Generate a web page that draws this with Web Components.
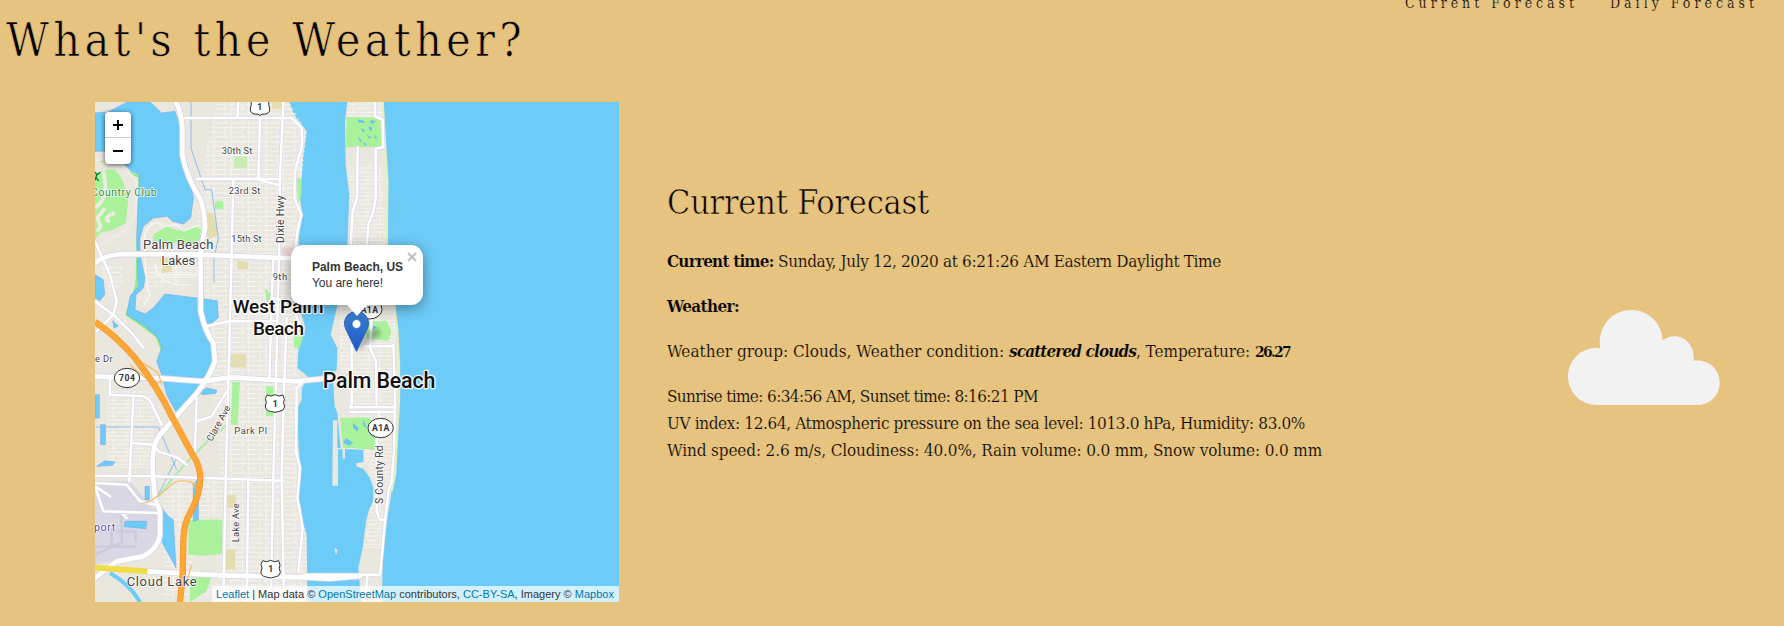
<!DOCTYPE html>
<html lang="en">
<head>
<meta charset="utf-8">
<title>What's the Weather?</title>
<style>
  html, body { margin: 0; height: 100%; overflow: hidden; background: #e6c47f; color: #000; }
  body { font-family: "DejaVu Serif Condensed", "DejaVu Serif", serif; font-stretch: condensed; }
</style>
</head>
<body>
<weather-page></weather-page>
<script>
const define = (name, html, setup) => customElements.define(name, class extends HTMLElement {
  connectedCallback() {
    if (this.shadowRoot) return;
    const t = document.createElement('template');
    t.innerHTML = html;
    this.attachShadow({ mode: 'open' }).append(t.content.cloneNode(true));
    if (setup) setup(this);
  }
});

/* A run of text whose tracking is adjusted to fill a given measure. */
define('fit-text', `<style>:host{display:inline-block;white-space:pre;flex:none}</style><slot></slot>`, el => {
  const w = +el.getAttribute('w'), n = el.textContent.length;
  const natural = el.getBoundingClientRect().width;
  el.style.letterSpacing = ((w - natural) / n).toFixed(4) + 'px';
  el.style.width = w + 'px';
});

define('site-header', `<style>
  :host{display:flex;justify-content:space-between;height:102px;box-sizing:border-box}
  h1{margin:0;padding-left:6px;font-weight:400;font-size:46.500px;line-height:80px;-webkit-text-stroke:.7px #e6c47f}
  nav{display:flex;gap:32px;margin:-12px 26px 0 0;height:30px;font-size:14px;line-height:30px;-webkit-text-stroke:.2px #e6c47f}
  a{color:inherit;text-decoration:none}
</style>
<h1><fit-text w="520">What's the Weather?</fit-text></h1>
<nav><a><fit-text w="173">Current Forecast</fit-text></a><a><fit-text w="148">Daily Forecast</fit-text></a></nav>`);

define('zoom-control', `<style>
  :host{display:block;position:absolute;left:10px;top:10px;width:26px;border-radius:4px;background:#fff;box-shadow:0 1px 5px rgba(0,0,0,.65)}
  div{height:26px;box-sizing:border-box;display:grid;place-items:center}
  div:first-of-type{border-bottom:1px solid #ccc}
  svg{display:block}
</style><div><svg width="10" height="10"><path d="M0 5H10M5 0V10" stroke="#000" stroke-width="2"/></svg></div><div><svg width="10" height="10"><path d="M0 5H10" stroke="#000" stroke-width="2"/></svg></div>`);

define('map-popup', `<style>
  :host{display:block;position:absolute;left:196px;top:143px;width:132px;height:60px;box-sizing:border-box;padding:14px 0 0 21px;border-radius:12px;background:#fff;box-shadow:0 3px 14px rgba(0,0,0,.4);font:12px/16px "Liberation Sans",Arial,sans-serif;font-stretch:normal;color:#333}
  b,p{display:block;margin:0}
  i{position:absolute;left:50%;top:60px;margin-left:-10px;width:20px;height:11px;background:#fff;clip-path:polygon(0 0,100% 0,50% 100%)}
  svg{position:absolute;right:6px;top:7px}
</style><b><fit-text w="91">Palm Beach, US</fit-text></b><p><fit-text w="71">You are here!</fit-text></p><i></i>
<svg width="10" height="10"><path d="M1 1 9 9M9 1 1 9" stroke="#c3c3c3" stroke-width="2.2"/></svg>`);

define('map-attribution', `<style>
  :host{display:block;position:absolute;right:0;bottom:0;height:16px;padding:0 5px 0 4px;background:rgba(255,255,255,.7);font:11px/16px "Liberation Sans",sans-serif;color:#333}
  a{color:#0078a8}
</style><fit-text w="398"><a>Leaflet</a> | Map data © <a>OpenStreetMap</a> contributors, <a>CC-BY-SA</a>, Imagery © <a>Mapbox</a></fit-text>`);

define('map-marker', `<style>:host{display:block;position:absolute;left:249px;top:209px}svg{display:block;overflow:visible}</style>
<svg width="25" height="41" viewBox="0 0 25 41"><defs><linearGradient id="m" x2="0" y2="1"><stop stop-color="#397fce"/><stop offset="1" stop-color="#2055cb"/></linearGradient><filter id="b"><feGaussianBlur stdDeviation="2"/></filter></defs>
<path d="M13 40 20 20 34 17Q40 23 31 28Z" opacity=".25" filter="url(#b)"/>
<path d="M12.5.5C5.8.5.5 5.8.5 12.3c0 3.4 1.5 6.6 3.3 10L12.5 40.3l8.7-18c1.8-3.4 3.3-6.6 3.3-10C24.500 5.800 19.200.5 12.500.5Z" fill="url(#m)" stroke="#2a69b5"/>
<circle cx="12.500" cy="13" r="4.400" fill="#fff" stroke="#2863b4" stroke-width=".6"/></svg>`);

define('map-tiles', `<style>
  :host{display:block}
  svg{display:block;font-family:Roboto,sans-serif;font-stretch:normal}
  .land{fill:#eae7df}.water{fill:#6dcbf8}.park{fill:#a9f29b}.sand{fill:#e3deb0}
  .c,.r{fill:none;stroke-linejoin:round;stroke-linecap:round}
  .c{stroke:#d9d5e7}.r{stroke:#fff}
  .t{fill:none;stroke:#f8f7f5;stroke-width:4}
  text{fill:#444;stroke:#fff;stroke-width:5;paint-order:stroke;stroke-linejoin:round;stroke-opacity:.85}
  .city{fill:#111;font-weight:500;stroke-width:8}
  .shield{fill:#fff;stroke:#333;stroke-width:3}
  .num{font-weight:700;font-size:26px;stroke:none;fill:#333}
</style>
<svg width="524" height="500" viewBox="15 12 1572 1500">
<defs>
  <pattern id="grid" width="52" height="42" patternUnits="userSpaceOnUse"><path d="M0 5H52M0 19H38M12 33H52M8 0V42M42 5V33" class="t" style="stroke-width:2.500"/></pattern>
  <pattern id="rows" width="80" height="48" patternUnits="userSpaceOnUse"><path d="M0 6H80M0 18H80M0 31H62M10 43H80M34 0V31M70 18V48" class="t" style="stroke-width:2.500"/></pattern>
  <path id="main" d="M15 12H598L612 50 650 100 640 170 634 240 630 300 638 350 626 420 625 560 632 640 646 690 626 740 622 810 654 836 636 870 635 905 620 935 626 1050 632 1120 626 1200 634 1260 650 1310 652 1512H15Z"/>
  <path id="isle" d="M772 12 765 70 767 200 778 290 772 440 745 610 722 710 742 750 740 815 716 836 730 855 734 925 742 945 752 1050 820 1056V1092L798 1096 800 1106 820 1112 840 1140 850 1170V1210L838 1232 828 1270 818 1350 805 1410 814 1512H875L880 1350 892 1260 905 1180 915 1130 927 900 927 800 922 700 914 630 890 440 892 250 885 140 878 12Z"/>
</defs>
<rect x="15" y="12" width="1572" height="1500" class="water"/>
<use href="#main" class="land"/><use href="#isle" class="land"/>
<path d="M878 12 885 140 892 250 890 440 914 630 922 700 927 800 927 900 915 1130 905 1180" fill="none" stroke="#e9eec2" stroke-width="7"/>
<path d="M380 12H598L650 100 630 300 625 560 626 740 622 810 620 935 626 1200 650 1310V1512H395L390 1120 360 770 320 430 330 240Z" fill="url(#grid)"/>
<path d="M776 200H880L890 440 915 630V900L905 1150 880 1350H820L855 1170 820 1050 780 920 750 810V610L785 440ZM772 12H875V70H772ZM50 880H190V1110H50Z" fill="url(#rows)"/>
<path d="M220 1130H390V1260H310V1460H395V1500H220ZM30 500H100V550L60 600ZM170 590V500H320V540H260Z" fill="url(#grid)"/>
<!-- airport -->
<path d="M15 1150H120L170 1210 200 1240 215 1300 205 1340 160 1370 15 1400Z" fill="#d9d7e3"/>
<path d="M15 1346H138M15 1300H137V1330M15 1370 90 1335M65 1290V1350M95 1250V1340" stroke="#cbc9da" stroke-width="7" fill="none"/>
<!-- parks -->
<path d="M15 190 70 185 130 230 148 235 140 560 110 650 160 685 200 715 215 755" fill="none" stroke="#8aef82" stroke-width="7"/>
<path class="park" d="M15 225 50 215 75 215 95 240 115 300 108 375 70 395 30 405 15 425Z"/>
<path class="park" d="M190 410 230 385 265 398 320 385 333 395 331 425 300 438 190 430Z"/>
<path class="park" d="M375 310H400V332H375ZM620 242H634V290L625 320ZM525 572 555 595 530 612ZM612 716H640L628 750H612ZM770 58H870L875 148H768ZM427 852H450L443 980H422ZM528 865H550V955H528ZM750 960 835 958 862 985V1055L760 1050ZM822 670H890L904 700 895 728 830 722ZM295 1265H397V1368L345 1373 295 1370ZM300 1440 365 1436 350 1480 300 1512Z"/>
<path d="M432 175H471V210H432Z" fill="#c9ebb4"/>
<path class="sand" d="M350 340 370 345 385 410 355 425 345 390ZM210 480H248L244 522 215 525ZM442 485 475 495V514H442ZM546 12H575V33H546ZM418 768H468V808H418ZM410 1190H438V1230H410ZM406 1354H436V1414H406Z"/>
<path d="M575 448H615V475H575Z" fill="#ecd3d3"/>
<!-- golf paths and residential loops -->
<path d="M15 190 70 175 140 250 135 350 105 400 30 440M40 220Q60 300 15 330M20 400 32 385 22 360 45 330M60 372Q35 360 75 345" fill="none" stroke="#eeebe4" stroke-width="11"/>
<path class="t" d="M160 450 165 405Q190 355 220 385L260 380 280 398 325 382M165 450Q165 570 180 590L160 625M195 495Q205 570 300 560M325 500V570M200 530H325M215 510V450M258 490V560"/>
<!-- lakes -->
<g class="water" stroke="#719dec" stroke-width="1.500">
<path d="M112 12H180L215 45 255 40 268 80 275 155 295 205 302 260 310 300 302 360 280 378 248 370 232 355 190 360 160 385 150 420V470L165 540 160 570 138 590 135 635 165 648 190 630 225 588 320 600 382 608 385 660 345 690 370 740 368 790 330 870 260 945 230 890 215 830 200 790 215 750 205 720 160 680 110 650 120 595 145 565 140 420 148 230 125 220 100 195 70 180 48 160V45Z"/>
<path d="M15 45V160H45V42ZM15 530 40 545 44 590 30 608 15 600ZM68 668 85 684 72 690ZM15 890H28V960H15ZM32 980H46V1040H32ZM20 1105 45 1088 75 1092 68 1102ZM325 885 350 870 380 876 378 886 340 890ZM165 1165H178V1205H165ZM215 1230 235 1255 250 1265 258 1410 245 1385 228 1355 215 1330ZM105 1270H170L168 1292 102 1286ZM325 1140V1265L310 1270V1160Z"/>
</g>
<path d="M60 1425Q120 1460 150 1512" stroke="#6dcbf8" stroke-width="12" fill="none"/>
<path d="M303 12V150L345 275H365L385 420 372 480V555M18 987H205L260 1115M260 1080 205 1190" stroke="#8bbff0" stroke-width="3" fill="none"/>
<g fill="#6bc2ed"><path d="m805 64 20 6-4 6-18-4ZM812 90l15 8-8 4ZM845 66l12 4-9 8-9-5ZM838 84l10 6-5 10-8-9ZM803 114l13 15-6 4ZM820 132l11 8-7 3ZM854 110l9 10-7 3ZM829 109l16 10-7 3ZM790 975l16 16-5 10-13-14ZM818 963l12 25-9-2ZM838 975l10 45-14-20ZM768 1020l22 14-12 9-18-8ZM847 680l13 8-11 7Z"/></g>
<path class="land" d="M729 967H742V1050H800V1054H765V1082H758V1054H744V1163H727ZM640 1430H805V1445H640ZM733 1350 743 1355 738 1372Z"/>
<path d="M205 1195Q290 1080 410 980" stroke="#b7e7b3" stroke-width="7" fill="none"/>
<!-- streets: casings first, then fills -->
<defs>
<g id="mid"><path d="M285 60H605L635 90 637 140 615 220 613 300 634 350 622 400 615 470M445 12 442 60M320 242H500L572 243M510 60 505 245 570 262M580 12 570 240 567 470 560 760 550 1140 542 1512M430 245 425 470 415 860 408 1100 400 1512M550 480 545 620 538 840M590 660 582 880 575 1130 582 1512M545 600 600 610 630 680M350 685 415 670H560M15 1133 190 1135 580 1148M475 1148 470 1512M640 850 620 870 618 1060 630 1110 622 1200 638 1290 625 1420M320 900 315 1060M320 970 365 955 410 880M60 840V890L160 895Q185 905 190 930L215 980M130 900 118 1150M125 1035 190 1040 205 1060 265 1080 290 1100M15 1155 110 1160 150 1210 195 1220M15 1165 40 1240 200 1245M15 1165 60 1195M110 1260 90 1240M15 430 60 530 80 610 70 650 20 700M15 610 75 655 130 710 160 750"/><path d="M855 12 855 55 878 65 880 148 857 152V300L850 340 835 380 830 440M803 148 801 300 788 340 782 440M845 660 840 750 858 790 860 920M910 740 915 900 912 1060 905 1150 895 1180 885 1270 870 1430H640M860 1020V1240L870 1265H885M780 928H915M780 942H910M785 740V930M865 940 870 965M832 1435 825 1512M820 745H905"/></g>
<g id="big"><path d="M258 12Q275 45 277 90V170Q290 240 330 300 345 340 345 390L332 460V640Q345 700 370 735L375 790Q350 860 290 920L210 1010Q185 1040 188 1120L195 1200 210 1240V1310Q205 1350 160 1375L80 1390 15 1440"/><path d="M15 495Q45 470 100 468L330 470 620 482M15 836 200 840 340 850 420 838 620 850 720 840H780M170 1420 400 1432 640 1438 720 1442 810 1434"/></g>
</defs>
<use href="#mid" class="c" stroke-width="11"/><use href="#big" class="c" stroke-width="19"/>
<use href="#mid" class="r" stroke-width="7.500"/><use href="#big" class="r" stroke-width="14"/>
<!-- motorway and ramps -->
<path d="M120 800 190 860 215 850M120 770 205 825 215 860M155 1215Q180 1220 250 1155 280 1140 320 1160M300 1148 320 1175M305 1400 290 1450" stroke="#f2bf71" stroke-width="4" fill="none"/>
<path d="M15 672Q80 715 135 780 205 870 240 945L305 1065Q335 1110 330 1150 328 1195 300 1245 280 1280 280 1330L278 1430 270 1512" fill="none" stroke="#f6962a" stroke-width="19"/>
<path d="M15 672Q80 715 135 780 205 870 240 945L305 1065Q335 1110 330 1150 328 1195 300 1245 280 1280 280 1330L278 1430 270 1512" fill="none" stroke="#ffa736" stroke-width="15"/>
<path d="M15 1409 172 1420" stroke="#f0dc45" stroke-width="17"/>
<!-- route shields -->
<path class="shield" d="M485 5Q510 12 535 5L537 24Q544 43 528 48 514 47 510 52 506 47 492 48 476 43 483 24Z"/>
<g id="sh"><path class="shield" d="M531 891Q543 898 555 890 567 898 579 891L583 904Q578 914 584 926 582 939 568 940L555 943 541 940Q526 938 526 924 532 913 526 902Z"/><text class="num" x="548" y="926">1</text></g>
<use href="#sh" x="-13" y="497"/>
<text class="num" x="502" y="37">1</text>
<ellipse class="shield" cx="111" cy="840" rx="38" ry="29"/><text class="num" x="87" y="849" textLength="48">704</text>
<ellipse class="shield" cx="872" cy="990" rx="38" ry="29"/><text class="num" x="846" y="999" textLength="52">A1A</text>
<ellipse class="shield" cx="838" cy="634" rx="38" ry="29"/><text class="num" x="812" y="644" textLength="52">A1A</text>
<!-- labels -->
<g font-size="28">
<text x="395" y="167" textLength="92">30th St</text><text x="416" y="289" textLength="95">23rd St</text><text x="424" y="433" textLength="91">15th St</text><text x="548" y="547" textLength="80">9th St</text>
<text x="433" y="1008" textLength="98">Park Pl</text><text x="15" y="793" textLength="53">e Dr</text>
<text transform="translate(581 435)rotate(-90)" textLength="143" font-size="32">Dixie Hwy</text>
<text transform="translate(448 1333)rotate(-90)" textLength="117">Lake Ave</text>
<text transform="translate(365 1032)rotate(-61)" textLength="118">Clare Ave</text>
<text transform="translate(880 1218)rotate(-90)" textLength="176" font-size="31">S County Rd</text>
</g>
<text x="4" y="294" font-size="31" textLength="196" style="fill:#3b8a3e">Country Club</text>
<path d="m14 222 8 8 9-7M20 229l-2 10 8 10M18 239l-5 10" stroke="#087a28" stroke-width="4" fill="none"/>
<text x="12" y="1298" font-size="32" textLength="64" style="fill:#5a50b0">port</text>
<text x="159" y="453" font-size="39" textLength="211">Palm Beach</text><text x="214" y="500" font-size="39" textLength="102">Lakes</text>
<text x="110" y="1464" font-size="39" textLength="210">Cloud Lake</text>
<g font-size="57"><text class="city" x="428" y="644" textLength="273">West Palm</text><text class="city" x="489" y="710" textLength="153">Beach</text><text class="city" x="698" y="870" textLength="338" font-size="64">Palm Beach</text></g>
</svg>`);

define('location-map', `<style>:host{display:block;position:relative;width:524px;height:500px;overflow:hidden;font-stretch:normal}</style>
<map-tiles></map-tiles><map-marker></map-marker><map-popup></map-popup><zoom-control></zoom-control><map-attribution></map-attribution>`);

define('current-forecast', `<style>
  :host{display:block;padding-top:76px;font-size:17px;line-height:27px;-webkit-text-stroke:.2px #e6c47f}
  h2{margin:0 0 22px;font-weight:400;font-size:34px;line-height:48px;-webkit-text-stroke:.6px #e6c47f}
  p{margin:0 0 18px}
  .line{display:flex;height:27px}
</style>
<h2><fit-text w="262">Current Forecast</fit-text></h2>
<p class="line"><b><fit-text w="111">Current time: </fit-text></b><fit-text w="443">Sunday, July 12, 2020 at 6:21:26 AM Eastern Daylight Time</fit-text></p>
<p class="line"><b><fit-text w="72">Weather:</fit-text></b></p>
<p class="line"><fit-text w="342">Weather group: Clouds, Weather condition: </fit-text><b><i><fit-text w="127">scattered clouds</fit-text></i></b><fit-text w="119">, Temperature: </fit-text><b style="font-size:15.5px"><fit-text w="35">26.27</fit-text></b></p>
<div class="line"><fit-text w="371">Sunrise time: 6:34:56 AM, Sunset time: 8:16:21 PM</fit-text></div>
<div class="line"><fit-text w="638">UV index: 12.64, Atmospheric pressure on the sea level: 1013.0 hPa, Humidity: 83.0%</fit-text></div>
<div class="line"><fit-text w="655">Wind speed: 2.6 m/s, Cloudiness: 40.0%, Rain volume: 0.0 mm, Snow volume: 0.0 mm</fit-text></div>`);

define('cloud-icon', `<style>:host{display:block}svg{display:block}</style>
<svg width="152" height="95" viewBox="85 60 456 286"><path fill="#f2f2f2" d="M170 346A85.500 85.500 0 0 1 170 174L181 175C172 112 215 60 274 60C328 60 367 101 369 151C411 119 470 154 462 213C507 207 541 239 541 279C541 316 511 346 474 346Z"/></svg>`);

define('weather-page', `<style>
  :host{display:block}
  main{display:grid;grid-template-columns:524px 1fr 152px;column-gap:48px;padding:0 64px 0 95px}
  cloud-icon{margin-top:208px}
</style>
<site-header></site-header>
<main><location-map></location-map><current-forecast></current-forecast><cloud-icon></cloud-icon></main>`);
</script>
</body>
</html>
